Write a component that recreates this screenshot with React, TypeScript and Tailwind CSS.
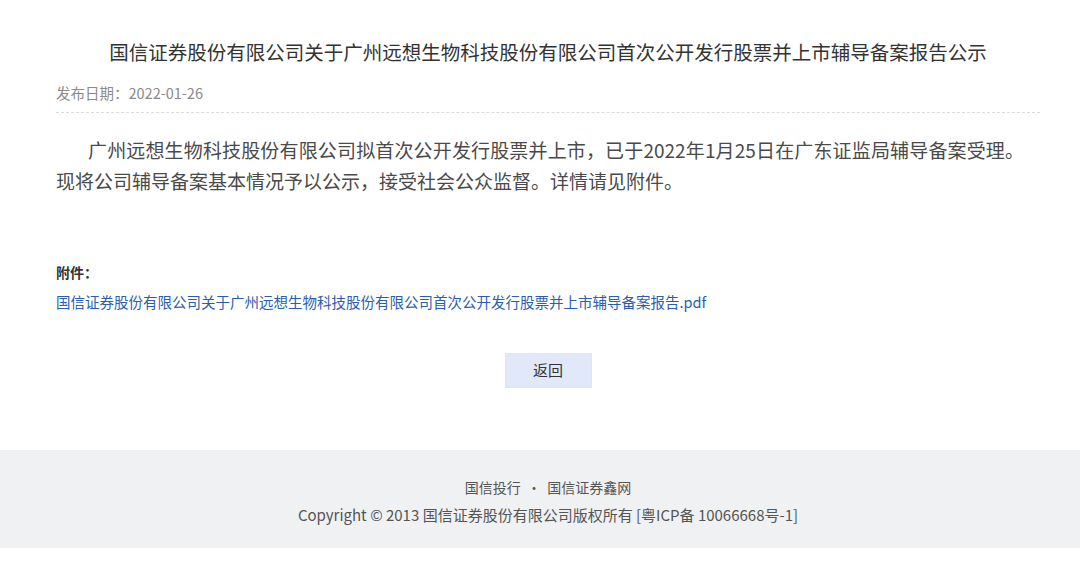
import React from "react";

const FONT = { fontFamily: '"Noto Sans CJK SC", "Noto Sans", sans-serif' };

export default function App() {
  return (
    <div className="min-h-[583px] bg-white" style={FONT}>
      <div className="ml-[56px] w-[984px] pt-[38px]">
        <h1 className="text-center text-[19.5px] leading-[28px] font-normal text-[#333333]">
          国信证券股份有限公司关于广州远想生物科技股份有限公司首次公开发行股票并上市辅导备案报告公示
        </h1>
        <div className="mt-[17px] text-[14.5px] leading-[20px] text-[#8a8a8a]">发布日期：2022-01-26</div>
        <div className="mt-[9px] border-b border-dashed border-[#dcdcdc]" />
        <div className="mt-[21px] pr-[16px] text-[19px] leading-[31px] text-[#4a4a4a]">
          <div className="indent-[32px] text-justify [text-align-last:justify]">
            广州远想生物科技股份有限公司拟首次公开发行股票并上市，已于2022年1月25日在广东证监局辅导备案受理。
          </div>
          <div>现将公司辅导备案基本情况予以公示，接受社会公众监督。详情请见附件。</div>
        </div>
        <div className="mt-[66px] text-[14px] leading-[20px] font-bold text-[#333333]">附件：</div>
        <div className="mt-[10px] text-[14.5px] leading-[20px]">
          <a className="text-[#2a5db0] no-underline" href="#">
            国信证券股份有限公司关于广州远想生物科技股份有限公司首次公开发行股票并上市辅导备案报告.pdf
          </a>
        </div>
        <div className="mt-[41px] flex justify-center">
          <button className="w-[87px] h-[35px] bg-[#e1e8f9] text-[15px] text-[#333333] border border-[#dfe5f3]">
            返回
          </button>
        </div>
      </div>
      <footer className="mt-[62px] h-[98px] bg-[#eff1f3] pl-[16px] flex flex-col items-center pt-[27px] text-[#555555]">
        <div className="text-[14px] leading-[20px]">国信投行&nbsp;&nbsp;·&nbsp;&nbsp;国信证券鑫网</div>
        <div className="mt-[8px] text-[15px] leading-[20px]">
          Copyright © 2013 国信证券股份有限公司版权所有 [粤ICP备 10066668号-1]
        </div>
      </footer>
    </div>
  );
}
